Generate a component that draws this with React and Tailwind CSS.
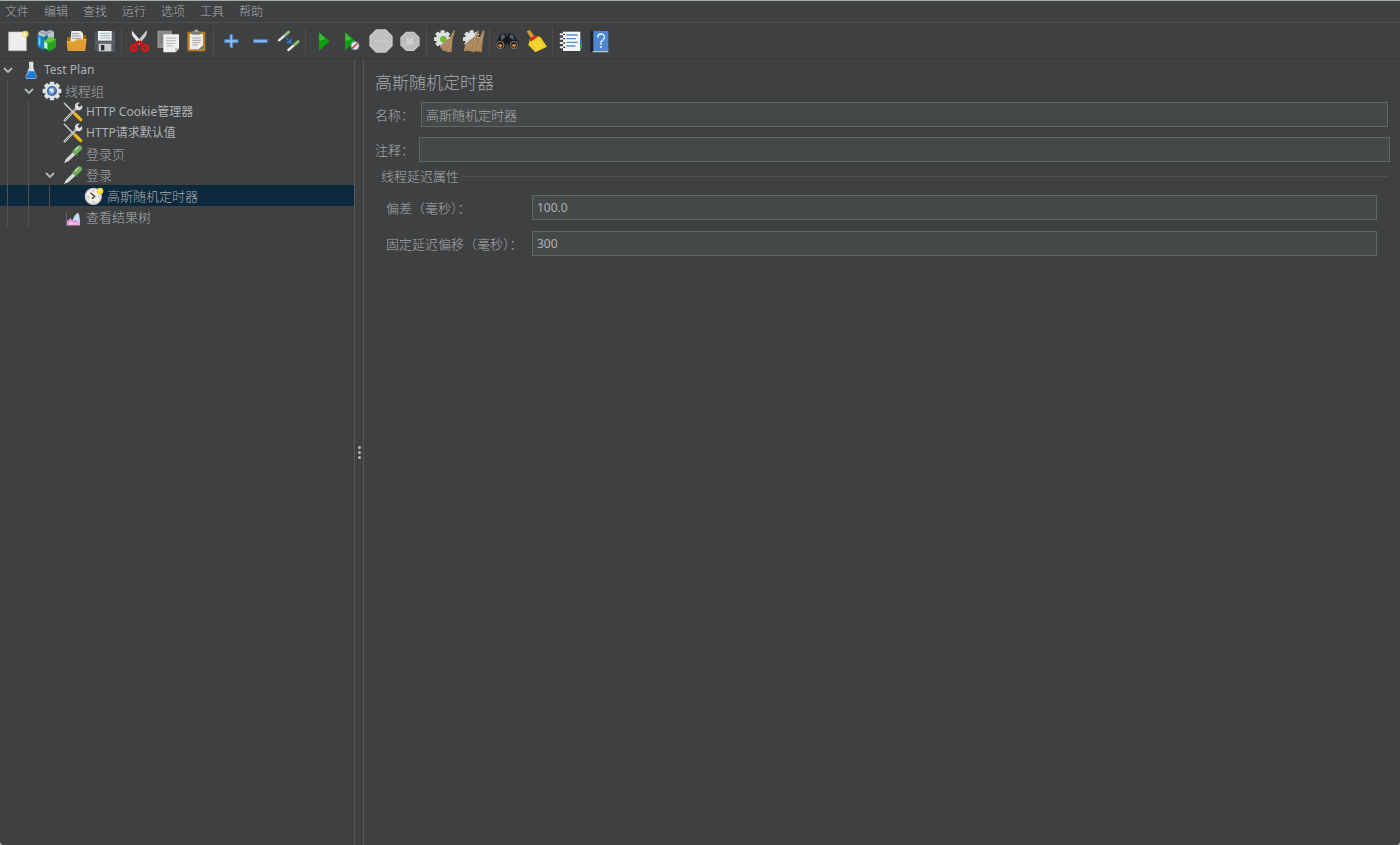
import React from 'react';

const Svg = ({ size = 'size-6', box = 72, children }) => (
  <svg className={`${size} shrink-0`} viewBox={`0 0 ${box} ${box}`} fill="none" aria-hidden="true">
    {children}
  </svg>
);

const Gear = ({ cx, cy, r, fill = '#dcdfe0' }) => (
  <g fill={fill}>
    {[0, 45, 90, 135].map((a) => (
      <rect key={a} x={cx - r * 0.24} y={cy - r} width={r * 0.48} height={r * 2} rx="2" transform={`rotate(${a} ${cx} ${cy})`} />
    ))}
    <circle cx={cx} cy={cy} r={r * 0.78} />
  </g>
);

const NewIcon = () => (
  <Svg>
    <path d="M8 9H61V65H8Z" fill="#eeeeec" stroke="#c4c6c6" strokeWidth="2" />
    <path d="M13 14V62" stroke="#cfd1d1" strokeWidth="2" strokeDasharray="3 9" />
    <circle cx="58" cy="15" r="10" fill="#ebe66a" opacity=".8" />
    <circle cx="58" cy="15" r="4" fill="#fbf9b0" />
  </Svg>
);
const TemplatesIcon = () => (
  <Svg>
    <path d="M10 10L22 3L33 8L45 3L57 8V26L34 30L10 22Z" fill="#b9c4c9" />
    <path d="M16 9L31 14L49 8M33 15V28" stroke="#7f8c93" strokeWidth="3" />
    <path d="M6 18L28 23V64L8 54Z" fill="#1787c4" />
    <path d="M28 23L38 17V40L28 64Z" fill="#0a6aa0" />
    <path d="M11 25L16 26V50L11 48Z" fill="#74d3f5" />
    <path d="M27 35L46 23L63 31V55L44 67L27 57Z" fill="#27a51d" />
    <path d="M27 35L46 23L63 31L44 41Z" fill="#5fce38" />
    <path d="M28 37L37 42V61L28 56Z" fill="#d8f5d4" />
  </Svg>
);
const OpenIcon = () => (
  <Svg>
    <path d="M9 24H27L31 18H66V56H9Z" fill="#a9680c" />
    <path d="M22 6H50L57 13V42H19Z" fill="#eceded" />
    <path d="M25 14H46M24 21H50M23 28H51" stroke="#999b9c" strokeWidth="3" />
    <path d="M8 36H32L37 30H68L64 66H11Z" fill="#dd9d30" />
    <path d="M10 38H33L38 32H66" stroke="#f6ce76" strokeWidth="2" />
  </Svg>
);
const SaveIcon = () => (
  <Svg>
    <path d="M6 7H66V68H12L5 61Z" fill="#53595c" />
    <path d="M15 6H56V35H15Z" fill="#eef2f3" />
    <path d="M21 13H51M21 20H51M21 27H51" stroke="#9dbac8" strokeWidth="3" />
    <path d="M5 39H66" stroke="#777e81" strokeWidth="2" />
    <path d="M17 44H55V67H17Z" fill="#c9cccd" />
    <path d="M24 48H34V64H24Z" fill="#2b2f31" />
  </Svg>
);
const CutIcon = () => (
  <Svg>
    <path d="M15 5Q12 17 22 28L38 47L46 41Z" fill="#e7e8e8" />
    <path d="M59 4Q62 16 53 26L35 47L27 41Z" fill="#c6c9c9" />
    <path d="M37 37L23 48M37 37L49 49" stroke="#d20f12" strokeWidth="9" />
    <ellipse cx="20" cy="57" rx="8" ry="8" stroke="#db1517" strokeWidth="8" />
    <ellipse cx="54" cy="57" rx="8" ry="8" stroke="#db1517" strokeWidth="8" />
  </Svg>
);
const CopyIcon = () => (
  <Svg>
    <path d="M4 5H48V57H4Z" fill="#8b8d8e" />
    <path d="M12 16H40M12 24H36M12 32H30M12 40H28" stroke="#747677" strokeWidth="3" />
    <path d="M22 16H69V59L59 70H22Z" fill="#eeefee" />
    <path d="M30 27H61M30 35H61M30 43H58M30 51H52" stroke="#b4b6b7" strokeWidth="3" />
    <path d="M69 58H58V70Z" fill="#b6b8b8" />
  </Svg>
);
const PasteIcon = () => (
  <Svg>
    <rect x="7" y="8" width="54" height="59" rx="3" fill="#b67d28" />
    <path d="M14 15H54V61H14Z" fill="#eeeeec" />
    <path d="M22 6H46V17H22Z" fill="#777b7c" />
    <path d="M29 2H39V9H29Z" fill="#a5a8a9" />
    <path d="M22 27H48M22 34H48M22 41H45M22 48H38" stroke="#a2a4a5" strokeWidth="3" />
    <path d="M54 48V61H40Z" fill="#6c6f70" />
    <path d="M40 48H54L40 61Z" fill="#fafafa" />
  </Svg>
);
const PlusIcon = () => (
  <Svg>
    <path d="M33 17H41V32H57V41H41V56H33V41H17V32H33Z" fill="#8fbaec" stroke="#4a7fc2" strokeWidth="3" />
  </Svg>
);
const MinusIcon = () => (
  <Svg>
    <path d="M17 32H58V41H17Z" fill="#8fbaec" stroke="#4a7fc2" strokeWidth="3" />
  </Svg>
);
const ToggleIcon = () => (
  <Svg>
    <path d="M6 34L27 16M34 63L54 46" stroke="#eceded" strokeWidth="7" strokeLinecap="round" />
    <path d="M26 17L35 9M53 47L63 38" stroke="#8cba70" strokeWidth="9" strokeLinecap="round" />
    <path d="M24 21L38 39" stroke="#2b72cf" strokeWidth="4" strokeDasharray="7 2" />
    <path d="M45 28L43 45L27 41Z" fill="#2d78d8" />
  </Svg>
);
const StartIcon = () => (
  <Svg>
    <path d="M24 9L56 37L24 66Z" fill="#0c9d12" />
    <path d="M25 12L44 29L25 37Z" fill="#3fbb38" />
  </Svg>
);
const StartNoPauseIcon = () => (
  <Svg>
    <path d="M15 9L47 37L15 65Z" fill="#0c9d12" />
    <path d="M16 12L35 29L16 37Z" fill="#3fbb38" />
    <circle cx="45" cy="50" r="12" fill="#e6edf4" stroke="#7f9fc0" strokeWidth="3" />
    <path d="M37 58L53 42" stroke="#d93a38" strokeWidth="5" />
  </Svg>
);
const StopIcon = () => (
  <Svg>
    <path d="M21 1H51L71 21V51L51 71H21L1 51V21Z" fill="#c7c8c8" />
    <path d="M23 6H49L66 23V49L49 66H23L6 49V23Z" fill="#c0c1c1" />
    <path d="M16 33H56V39H16Z" fill="#c8c9c9" />
  </Svg>
);
const ShutdownIcon = () => (
  <Svg>
    <path d="M24 8H48L65 25V49L48 66H24L7 49V25Z" fill="#c5c6c6" />
    <path d="M25 12H47L61 26V48L47 62H25L11 48V26Z" fill="#bbbcbc" />
    <path d="M27 28L45 46M45 28L27 46" stroke="#cfd0d0" strokeWidth="9" />
  </Svg>
);
const ClearIcon = () => (
  <Svg>
    <Gear cx={32} cy={30} r={26} />
    <circle cx="34" cy="31" r="10" fill="#72b93f" />
    <path d="M65 3L69 6L62 31L59 69L47 70L31 64L24 52L39 37L54 27Z" fill="#a8845d" />
    <path d="M62 12L50 39L36 62M57 34L49 66M44 38L30 55" stroke="#bb986d" strokeWidth="3" />
  </Svg>
);
const ClearAllIcon = () => (
  <Svg>
    <Gear cx={32} cy={30} r={26} />
    <path d="M50 3L54 6L49 25L56 26L66 3L71 7L66 34L62 70L46 67L38 70L22 65L8 67L13 45L28 32L40 24Z" fill="#a8845d" />
    <path d="M48 14L36 38L24 62M46 34L37 66M65 18L56 43L50 64M26 39L14 60" stroke="#bb986d" strokeWidth="3" />
  </Svg>
);
const SearchIcon = () => (
  <Svg>
    <path d="M18 15L31 13L36 24L42 13L55 15L71 43V53L61 61L46 59L40 44H33L27 59L12 61L3 51V42Z" fill="#17191a" />
    <path d="M19 17L28 16L31 25L18 35ZM45 16L54 17L58 33L44 27Z" fill="#596063" />
    <circle cx="16" cy="48" r="12" fill="#777c7e" />
    <circle cx="57" cy="48" r="12" fill="#777c7e" />
    <circle cx="16" cy="48" r="9" fill="#2c1a10" />
    <circle cx="57" cy="48" r="9" fill="#2c1a10" />
    <path d="M9 49Q16 41 23 49L16 57ZM50 49Q57 41 64 49L57 57Z" fill="#d07f3c" />
  </Svg>
);
const BroomIcon = () => (
  <Svg>
    <path d="M8 7L18 3L31 22L22 29Z" fill="#d99a2d" />
    <path d="M19 27L34 20L49 24L69 53L34 70L13 48Z" fill="#f2cf25" />
    <path d="M17 28L35 18L41 24L20 38Z" fill="#cf2a1d" />
    <path d="M30 39L43 62M40 34L56 57" stroke="#fbe466" strokeWidth="3" />
  </Svg>
);
const LogIcon = () => (
  <Svg>
    <path d="M15 8H67V66H15Z" fill="#f2f4f5" />
    <path d="M66 32H72V45H66Z" fill="#2e72c8" />
    <path d="M66 46H72V59H66Z" fill="#34a334" />
    <path d="M25 18H59M25 29H54M25 40H59M25 51H52" stroke="#5a90cf" strokeWidth="4" />
    <path d="M8 16H20M8 29H20M8 42H20M8 55H20" stroke="#e7e8e8" strokeWidth="6" strokeLinecap="round" />
    <path d="M16 16H21M16 29H21M16 42H21M16 55H21" stroke="#252829" strokeWidth="4" />
  </Svg>
);
const HelpIcon = () => (
  <Svg>
    <path d="M10 6H23V69H10Z" fill="#1d2328" />
    <path d="M19 6H64V65H19Z" fill="#4c87d4" />
    <path d="M19 65H64V70H15Z" fill="#b9c7d8" />
    <path d="M32 26Q32 15 42 15Q53 16 52 26Q51 33 42 38V47" stroke="#eef4fb" strokeWidth="4" />
    <circle cx="42" cy="54" r="3" fill="#eef4fb" />
  </Svg>
);

const FlaskIcon = () => (
  <Svg size="size-5" box={60}>
    <path d="M24 5H37V23L47 49Q48 56 42 56H18Q12 56 14 49L24 23Z" fill="#dfe3e6" />
    <path d="M20 34H41L46 50Q46 55 41 55H19Q14 55 15 50Z" fill="#1d78d6" />
    <path d="M27 10V25L22 35" stroke="#b4bbc0" strokeWidth="2" />
    <path d="M20 43L24 36" stroke="#83c1f7" strokeWidth="3" />
  </Svg>
);
const ThreadGroupIcon = () => (
  <Svg size="size-5" box={60}>
    <Gear cx={30} cy={30} r={28} fill="#dfe2e4" />
    <circle cx="30" cy="30" r="15" fill="#355f9e" />
    <circle cx="30" cy="30" r="11" fill="#6f9cd6" />
    <path d="M23 23H33V29H38V37H28V31H23Z" fill="#eaf2fb" />
    <path d="M31 36H38V29" stroke="#264c88" strokeWidth="3" />
  </Svg>
);
const ToolsIcon = () => (
  <Svg size="size-5" box={60}>
    <path d="M5 55L42 17" stroke="#c9cccd" strokeWidth="7" strokeLinecap="round" />
    <path d="M6 54L42 17" stroke="#54595b" strokeWidth="2" />
    <path d="M50 2L43 9L50 16L57 9Q60 18 53 23Q45 27 38 21Q33 10 40 4Q45 0 50 2Z" fill="#dfe1e1" />
    <path d="M4 4L32 32" stroke="#d5d7d7" strokeWidth="4" strokeLinecap="round" />
    <path d="M36 36L53 53" stroke="#e9ae12" strokeWidth="10" strokeLinecap="round" />
    <path d="M37 35L53 50" stroke="#ffe06a" strokeWidth="2" />
  </Svg>
);
const PipetteIcon = () => (
  <Svg size="size-5" box={60}>
    <path d="M3 57L9 45L31 23L39 31L17 51Z" fill="#e0e3e3" />
    <path d="M13 48L34 28" stroke="#a7adae" strokeWidth="2" />
    <path d="M28 19L43 34" stroke="#416c3d" strokeWidth="5" strokeLinecap="round" />
    <path d="M38 23L49 12" stroke="#6fae5b" strokeWidth="16" strokeLinecap="round" />
    <path d="M37 17L46 9" stroke="#b1dda0" strokeWidth="5" strokeLinecap="round" />
  </Svg>
);
const TimerIcon = () => (
  <Svg size="size-5" box={60}>
    <circle cx="28" cy="31" r="24" fill="#f1eee5" stroke="#c9c6cd" strokeWidth="4" />
    <path d="M19 20L32 31L24 38" stroke="#3c3c38" strokeWidth="4" />
    <path d="M28 12V16M28 46V50M10 31H14M42 31H46" stroke="#85827c" strokeWidth="3" />
    <circle cx="48" cy="15" r="10" fill="#f2d837" />
    <circle cx="46" cy="13" r="4" fill="#fff29b" />
  </Svg>
);
const ResultsIcon = () => (
  <Svg size="size-5" box={60}>
    <path d="M10 14V56H53" stroke="#77797b" strokeWidth="2" />
    <path d="M28 42Q36 18 46 18Q51 26 51 52H32Z" fill="#c3d9f8" />
    <path d="M12 55V42L22 34L32 42L39 38L51 50V55Z" fill="#e58bd0" />
    <path d="M14 53L23 42L34 49L41 45L50 53Z" fill="#f9c5ea" />
  </Svg>
);

const Chevron = () => (
  <svg className="size-3" viewBox="0 0 12 12" fill="none" aria-hidden="true">
    <path d="M2 4L6 8L10 4" stroke="#b4b7b8" strokeWidth="1.8" />
  </svg>
);

const menus = ['文件', '编辑', '查找', '运行', '选项', '工具', '帮助'];

const toolGroups = [
  [['新建', NewIcon], ['模板', TemplatesIcon], ['打开', OpenIcon], ['保存', SaveIcon]],
  [['剪切', CutIcon], ['复制', CopyIcon], ['粘贴', PasteIcon]],
  [['全部展开', PlusIcon], ['全部折叠', MinusIcon], ['切换', ToggleIcon]],
  [['启动', StartIcon], ['不停顿启动', StartNoPauseIcon], ['停止', StopIcon], ['关闭', ShutdownIcon]],
  [['清除', ClearIcon], ['清除全部', ClearAllIcon]],
  [['搜索', SearchIcon], ['重置搜索', BroomIcon]],
  [['函数助手', LogIcon], ['帮助主题', HelpIcon]],
];

const nodes = [
  { label: 'Test Plan', level: 0, icon: FlaskIcon, open: true, latin: true },
  { label: '线程组', level: 1, icon: ThreadGroupIcon, open: true },
  { label: 'HTTP Cookie管理器', level: 2, icon: ToolsIcon, latin: true },
  { label: 'HTTP请求默认值', level: 2, icon: ToolsIcon, latin: true },
  { label: '登录页', level: 2, icon: PipetteIcon },
  { label: '登录', level: 2, icon: PipetteIcon, open: true },
  { label: '高斯随机定时器', level: 3, icon: TimerIcon, selected: true },
  { label: '查看结果树', level: 2, icon: ResultsIcon },
];

function TreeRow({ node }) {
  const Icon = node.icon;
  return (
    <li className={`flex h-[21px] items-center ${node.selected ? 'bg-[#0d293e]' : ''}`}>
      {Array.from({ length: node.level }, (_, i) => (
        <span key={i} className="h-full w-[21px] shrink-0 pl-[7px]">
          <span className="block h-full w-px bg-[#505355]" />
        </span>
      ))}
      <span className="flex w-[21px] shrink-0 pl-0.5">
        {node.open && (
          <button type="button" aria-label={`折叠 ${node.label}`} aria-expanded="true">
            <Chevron />
          </button>
        )}
      </span>
      <button
        type="button"
        className={`flex items-center gap-[3px] whitespace-nowrap ${node.latin ? 'text-xs font-normal text-[#b0b2b3]' : 'text-[13px]'}`}
      >
        <Icon />
        {node.label}
      </button>
    </li>
  );
}

const inputClass =
  'h-[25px] min-w-0 flex-1 border border-[#5f6766] bg-[#45494a] px-1 outline-none focus:border-[#466d94]';

function Field({ id, label, value, labelClass, textClass = 'text-[13px]' }) {
  return (
    <div className="flex items-center">
      <label htmlFor={id} className={`shrink-0 whitespace-nowrap ${labelClass}`}>
        {label}
      </label>
      <input id={id} type="text" defaultValue={value} className={`${inputClass} ${textClass}`} />
    </div>
  );
}

export default function App() {
  return (
    <div className="flex min-h-screen flex-col bg-[#b9bcbd]">
      <div className="flex flex-1 flex-col rounded-b-[4px] border-t border-[#a4adab] bg-[#3e4042] font-['Noto_Sans','Noto_Sans_CJK_SC',sans-serif] text-[13px] leading-4 font-light text-[#a9abac]">
        <nav className="flex h-[22px] items-center border-b border-[#4d5052] pl-[5px] text-xs">
          {menus.map((m) => (
            <button key={m} type="button" className="w-[39px] text-left">
              {m}
            </button>
          ))}
        </nav>
        <div role="toolbar" aria-label="工具栏" className="flex h-9 items-center border-b border-[#37393b] pl-[3px]">
          {toolGroups.map((group, i) => (
            <React.Fragment key={i}>
              {i > 0 && <span className="mx-0.5 h-7 w-px bg-[#4d5052]" />}
              {group.map(([name, Icon]) => (
                <button key={name} type="button" aria-label={name} className="flex h-8 w-[29px] items-center justify-center">
                  <Icon />
                </button>
              ))}
            </React.Fragment>
          ))}
        </div>
        <div className="flex flex-1">
          <aside className="w-[354px] shrink-0">
            <ul>
              {nodes.map((n) => (
                <TreeRow key={n.label} node={n} />
              ))}
            </ul>
          </aside>
          <div className="flex w-2.5 shrink-0 flex-col items-center justify-center gap-0.5 border-x border-[#555859]">
            <span className="size-[3px] rounded-full bg-[#b5b7b8]" />
            <span className="size-[3px] rounded-full bg-[#b5b7b8]" />
            <span className="size-[3px] rounded-full bg-[#b5b7b8]" />
          </div>
          <main className="min-w-0 flex-1 pt-3 pr-2.5 pl-[11px]">
            <h1 className="text-[17px] leading-6 font-light">高斯随机定时器</h1>
            <div className="mt-[7px] flex flex-col gap-2.5">
              <div className="pr-0.5">
                <Field id="name" label="名称：" value="高斯随机定时器" labelClass="w-[46px]" />
              </div>
              <Field id="comment" label="注释：" value="" labelClass="w-11" />
            </div>
            <fieldset className="mt-1.5 mr-0.5 border-t border-[#505355]">
              <legend className="ml-[3px] px-[3px]">线程延迟属性</legend>
              <div className="flex flex-col gap-[11px] px-[11px] pt-[11px]">
                <Field id="deviation" label="偏差（毫秒）：" value="100.0" labelClass="w-[146px]" textClass="text-xs font-normal text-[#b0b2b3]" />
                <Field id="offset" label="固定延迟偏移（毫秒）：" value="300" labelClass="w-[146px]" textClass="text-xs font-normal text-[#b0b2b3]" />
              </div>
            </fieldset>
          </main>
        </div>
      </div>
    </div>
  );
}
